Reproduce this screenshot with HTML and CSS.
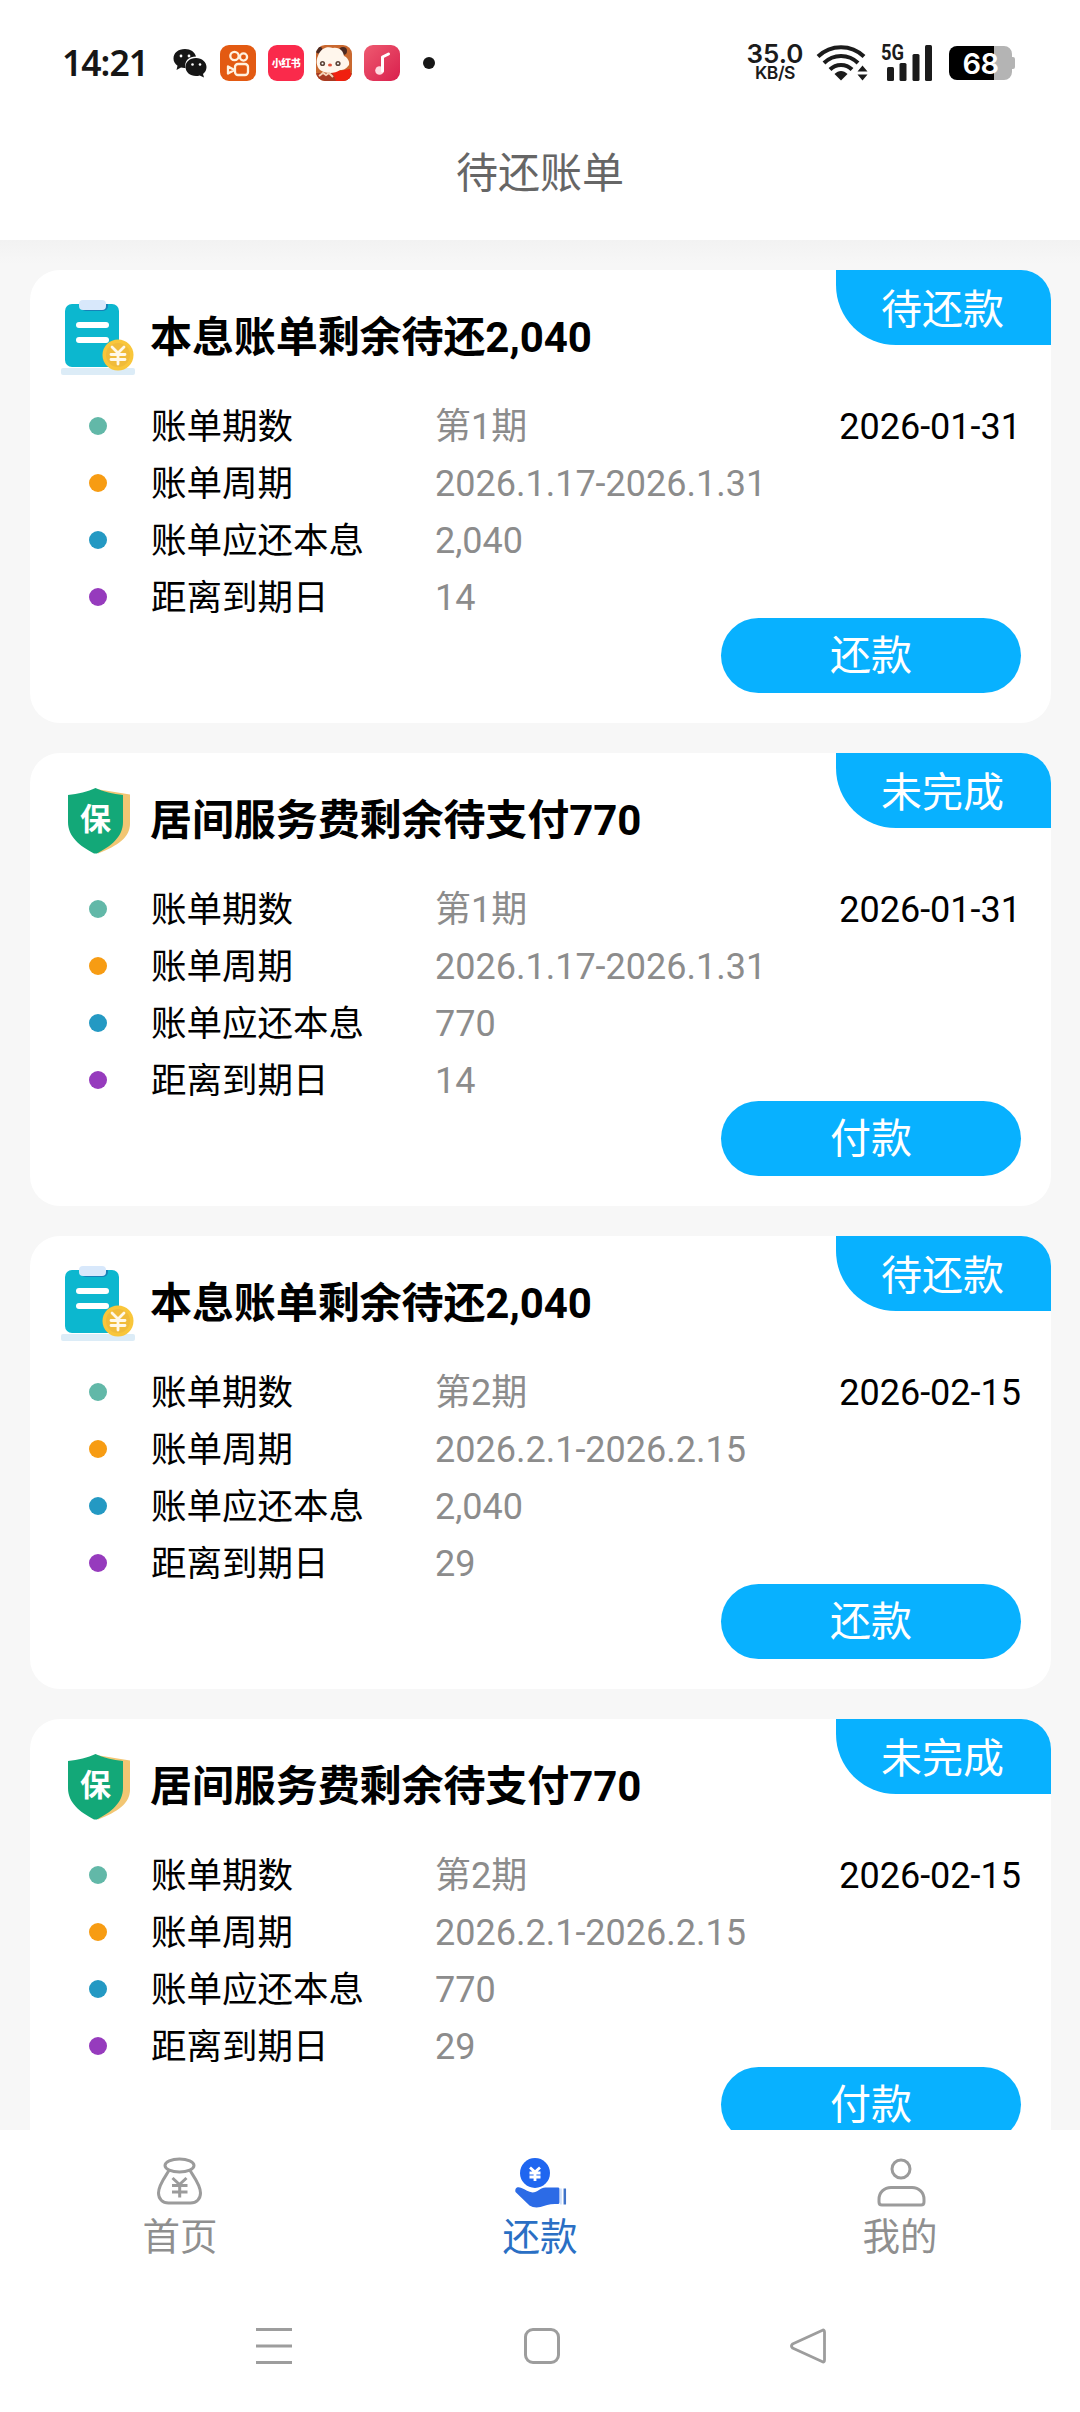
FILE: index.html
```html
<!DOCTYPE html>
<html lang="zh-CN">
<head>
<meta charset="utf-8">
<title>待还账单</title>
<link rel="stylesheet" href="styles.css">
</head>
<body>
<svg class="defs" width="0" height="0" aria-hidden="true">
  <symbol id="bill" viewBox="0 0 76 80">
    <rect x="1" y="70" width="74" height="7" rx="2" fill="#dcecf7"/>
    <rect x="5" y="6" width="54" height="63" rx="7" fill="#0cb7cf"/>
    <path d="M20 6h28v2a5 5 0 0 1-5 5H26a6 6 0 0 1-6-6z" fill="#1682b8"/>
    <rect x="19" y="2" width="27" height="10" rx="4" fill="#d8e8fb"/>
    <rect x="16" y="24" width="33" height="6" rx="3" fill="#fff"/>
    <rect x="16" y="39" width="33" height="6" rx="3" fill="#fff"/>
    <circle cx="58" cy="57" r="15.500" fill="#f9c63a"/>
    <circle cx="58" cy="57" r="12" fill="#f0bb3a"/>
    <path d="M52 49l6 6 6-6M51 56.500h14M51 61.500h14M58 55v11" fill="none" stroke="#fff8e8" stroke-width="2.800" stroke-linecap="round"/>
  </symbol>
  <symbol id="shield" viewBox="0 0 76 80">
    <path d="M36 8l34 5.500v29c0 14-12 22-32 30z" fill="#f2c673"/>
    <path d="M35.500 7C43 10.500 53 13 63 14V41c0 15-12 24-26 31.500h-3C20 65 8 56 8 41V14C18 13 28 10.500 35.500 7z" fill="#13a878"/>
    <text x="35.500" y="48.500" text-anchor="middle" class="shield-text">保</text>
  </symbol>
</svg>

<header class="status">
  <div class="status-left">
    <span class="clock">14:21</span>
    <svg class="wechat" width="34" height="30" viewBox="0 0 34 30">
      <path d="M12 1C5 1 .5 5 .5 10.500c0 3 1.500 5.500 4 7.300L3.500 22l4.500-2.500c1.500.4 3 .5 4.500.4C11 13 16 8.500 23 8.500 22 4 17.500 1 12 1z" fill="#161616"/>
      <path d="M23 10c-6.500 0-10.500 4-10.500 9s4.500 9 10.500 9c1.300 0 2.500-.2 3.700-.6L31 29.500l-1-3.600c2.300-1.700 3.500-4 3.500-6.900 0-5-4.500-9-10.500-9z" fill="#161616"/>
      <g fill="#fff"><circle cx="8" cy="8" r="1.400"/><circle cx="16" cy="8" r="1.400"/><circle cx="19.500" cy="16.500" r="1.300"/><circle cx="27" cy="16.500" r="1.300"/></g>
    </svg>
    <svg class="app" viewBox="0 0 36 36">
      <rect width="36" height="36" rx="9" fill="#e35a12"/>
      <g fill="none" stroke="#fff1df" stroke-width="2.300" stroke-linejoin="round"><circle cx="14.500" cy="11" r="4.200"/><circle cx="23.500" cy="12" r="3.600"/><rect x="15" y="19" width="13" height="11" rx="3"/><path d="M8 21.500l6.500 3.500L8 28.500z"/></g>
    </svg>
    <svg class="app" viewBox="0 0 36 36">
      <rect width="36" height="36" rx="9" fill="#fa2a4b"/>
      <text x="18" y="22" text-anchor="middle" class="app-text">小红书</text>
    </svg>
    <svg class="app" viewBox="0 0 36 36">
      <defs><clipPath id="round"><rect width="36" height="36" rx="9"/></clipPath></defs>
      <g clip-path="url(#round)">
        <rect width="36" height="36" fill="#c9682f"/>
        <path d="M0 28h36v8H0z" fill="#a83a22"/>
        <path d="M16 27l18-3 2 12H20z" fill="#f0200f"/>
        <circle cx="3" cy="5" r="3.500" fill="#4c2a22"/><circle cx="27" cy="6" r="4" fill="#4c2a22"/>
        <path d="M2 11C5 3 11 1 17 3c7-1 10 3 11 8 3 1 6 5 5 9-3 4-5 5-9 5-5 4-15 4-20 0C0 21 0 15 2 11z" fill="#fff6ec"/>
        <circle cx="6.500" cy="18.500" r="2.600" fill="#5d4438"/><circle cx="22" cy="18.500" r="2.600" fill="#5d4438"/>
        <circle cx="6.500" cy="18.500" r="1" fill="#fff"/><circle cx="22" cy="18.500" r="1" fill="#fff"/>
        <ellipse cx="14" cy="20" rx="2" ry="1.500" fill="#e2513a"/>
        <path d="M3 31l4-3 3 2 3-2 4 4" stroke="#f5d3b8" stroke-width="2" fill="none"/>
      </g>
    </svg>
    <svg class="app" viewBox="0 0 36 36">
      <defs><linearGradient id="pink" x1="0" y1="0" x2="1" y2="1"><stop offset="0" stop-color="#ee5a70"/><stop offset="1" stop-color="#d91f4d"/></linearGradient></defs>
      <rect width="36" height="36" rx="9" fill="url(#pink)"/>
      <circle cx="15.500" cy="25.500" r="4.300" fill="#ffd9e0"/>
      <path d="M18.500 26V12l6-3" fill="none" stroke="#fff" stroke-width="3" stroke-linecap="round" stroke-linejoin="round"/>
    </svg>
    <span class="more-dot"></span>
  </div>
  <div class="status-right">
    <div class="speed"><span class="speed-num">35.0</span><span class="speed-unit">KB/S</span></div>
    <svg width="54" height="40" viewBox="815 42 54 40">
      <g fill="none" stroke="#1b1b1b" stroke-width="4"><path d="M818 55.500a33 33 0 0 1 46 0"/><path d="M824 62a24 24 0 0 1 34 0"/><path d="M830 68.500a15.500 15.500 0 0 1 22 0"/></g>
      <path d="M834.500 73c4-4 9-4 13 0l-6.500 6.500z" fill="#1b1b1b"/>
      <path d="M857.500 70.500l5-6 5 6zM857.500 73.500l5 6 5-6z" fill="#1b1b1b"/>
    </svg>
    <svg class="signal" width="54" height="40" viewBox="880 42 54 40">
      <text x="881" y="59" class="net" textLength="23" lengthAdjust="spacingAndGlyphs">5G</text>
      <g fill="#1b1b1b"><rect x="887" y="66" width="7" height="14" rx="1.500"/><rect x="899.500" y="62" width="7" height="18" rx="1.500"/><rect x="912.500" y="53" width="7" height="27" rx="1.500"/><rect x="925" y="44" width="7" height="36" rx="1.500"/></g>
    </svg>
    <svg class="battery" width="68" height="36" viewBox="948 45 68 36">
      <path d="M994 46h10a8 8 0 0 1 8 8v3h1q2 0 2 2v8q0 2-2 2h-1v3a8 8 0 0 1-8 8h-10z" fill="#b4b4b4"/>
      <path d="M957 46h37v34h-37a8 8 0 0 1-8-8V54a8 8 0 0 1 8-8z" fill="#000"/>
      <text x="980.500" y="73.500" text-anchor="middle" class="charge">68</text>
    </svg>
  </div>
</header>

<h1 class="page-title">待还账单</h1>

<main class="list">
  <article class="card">
    <span class="tag">待还款</span>
    <div class="head"><svg class="head-icon"><use href="#bill"/></svg><h2>本息账单剩余待还2,040</h2></div>
    <div class="rows">
      <div class="row"><i class="dot teal"></i><span class="label">账单期数</span><span class="value">第1期</span><span class="date">2026-01-31</span></div>
      <div class="row"><i class="dot orange"></i><span class="label">账单周期</span><span class="value">2026.1.17-2026.1.31</span></div>
      <div class="row"><i class="dot blue"></i><span class="label">账单应还本息</span><span class="value">2,040</span></div>
      <div class="row"><i class="dot purple"></i><span class="label">距离到期日</span><span class="value">14</span></div>
    </div>
    <button class="pay">还款</button>
  </article>

  <article class="card">
    <span class="tag">未完成</span>
    <div class="head"><svg class="head-icon"><use href="#shield"/></svg><h2>居间服务费剩余待支付770</h2></div>
    <div class="rows">
      <div class="row"><i class="dot teal"></i><span class="label">账单期数</span><span class="value">第1期</span><span class="date">2026-01-31</span></div>
      <div class="row"><i class="dot orange"></i><span class="label">账单周期</span><span class="value">2026.1.17-2026.1.31</span></div>
      <div class="row"><i class="dot blue"></i><span class="label">账单应还本息</span><span class="value">770</span></div>
      <div class="row"><i class="dot purple"></i><span class="label">距离到期日</span><span class="value">14</span></div>
    </div>
    <button class="pay">付款</button>
  </article>

  <article class="card">
    <span class="tag">待还款</span>
    <div class="head"><svg class="head-icon"><use href="#bill"/></svg><h2>本息账单剩余待还2,040</h2></div>
    <div class="rows">
      <div class="row"><i class="dot teal"></i><span class="label">账单期数</span><span class="value">第2期</span><span class="date">2026-02-15</span></div>
      <div class="row"><i class="dot orange"></i><span class="label">账单周期</span><span class="value">2026.2.1-2026.2.15</span></div>
      <div class="row"><i class="dot blue"></i><span class="label">账单应还本息</span><span class="value">2,040</span></div>
      <div class="row"><i class="dot purple"></i><span class="label">距离到期日</span><span class="value">29</span></div>
    </div>
    <button class="pay">还款</button>
  </article>

  <article class="card">
    <span class="tag">未完成</span>
    <div class="head"><svg class="head-icon"><use href="#shield"/></svg><h2>居间服务费剩余待支付770</h2></div>
    <div class="rows">
      <div class="row"><i class="dot teal"></i><span class="label">账单期数</span><span class="value">第2期</span><span class="date">2026-02-15</span></div>
      <div class="row"><i class="dot orange"></i><span class="label">账单周期</span><span class="value">2026.2.1-2026.2.15</span></div>
      <div class="row"><i class="dot blue"></i><span class="label">账单应还本息</span><span class="value">770</span></div>
      <div class="row"><i class="dot purple"></i><span class="label">距离到期日</span><span class="value">29</span></div>
    </div>
    <button class="pay">付款</button>
  </article>
</main>

<nav class="tabs">
  <a class="tab">
    <svg width="54" height="54" viewBox="0 0 54 54" fill="none" stroke="#9b9b9b" stroke-width="3">
      <ellipse cx="26.500" cy="9.500" rx="14.500" ry="6.500"/>
      <path d="M16 14.500C12 21 5.500 29 5.500 37c0 6 4 10 10 10h22c6 0 10-4 10-10 0-8-6.500-16-10.500-22.500"/>
      <path d="M19.500 22l7 6.500 7-6.500M19 29.500h15.500M19 36h15.500M26.700 28v13.500"/>
    </svg>
    <span>首页</span>
  </a>
  <a class="tab active">
    <svg width="54" height="54" viewBox="-1.500 0 54 54">
      <circle cx="20.500" cy="17" r="15" fill="#1f66f0"/>
      <path d="M15.500 11.500l5 4.500 5-4.500M15 17h11M15 21h11M20.500 16v9" fill="none" stroke="#fff" stroke-width="2.800"/>
      <path d="M1 36c-1-4 2-6 6-4 4 1.500 7 4 11 4.500 5 0 8-5 13-5h12c1.500 0 2 .5 2 2v12.500c0 1.500-.5 2-2 2-7-.5-12 1-17 3-4 1-8 .5-11-1.500z" fill="#2c6be6"/>
      <path d="M46.300 32.500v16" stroke="#cfe0fb" stroke-width="2"/>
      <path d="M50.300 32.500v16" stroke="#3f73c9" stroke-width="2.500"/>
    </svg>
    <span>还款</span>
  </a>
  <a class="tab">
    <svg width="54" height="54" viewBox="0 0 54 54" fill="none" stroke="#9b9b9b" stroke-width="3">
      <circle cx="28" cy="13" r="9"/>
      <path d="M18 31.500h21c7 0 12 5 12 12v2.500c0 2-1 3-3 3H9c-2 0-3-1-3-3v-2.500c0-7 5-12 12-12z"/>
    </svg>
    <span>我的</span>
  </a>
</nav>

<footer class="sysnav">
  <svg width="40" height="40" viewBox="0 0 40 40" stroke="#9d9d9d" stroke-width="3"><path d="M2 3.500h36M2 20h36M2 36.500h36"/></svg>
  <svg width="40" height="40" viewBox="0 0 40 40" fill="none" stroke="#9d9d9d" stroke-width="3"><rect x="4.500" y="3.500" width="33" height="33" rx="7.500"/></svg>
  <svg width="40" height="40" viewBox="0 0 40 40" fill="none" stroke="#9d9d9d" stroke-width="2.800" stroke-linejoin="round"><path d="M34 4.500Q36.500 3 36.500 6v28q0 3-2.500 1.500L4.500 22q-2-2 0-4z"/></svg>
</footer>
</body>
</html>
```
FILE: styles.css
```css
* { box-sizing: border-box; }
body {
  margin: 0;
  width: 1080px;
  height: 2412px;
  overflow: hidden;
  display: flex;
  flex-direction: column;
  background: #fff;
  color: #000;
  font-family: Roboto, "Noto Sans CJK SC", sans-serif;
}
svg { display: block; flex: none; }
.defs { position: absolute; }
h1, h2 { margin: 0; }

.status {
  height: 126px;
  padding: 0 64px 0 62px;
  display: flex;
  justify-content: space-between;
  align-items: center;
}
.status-left { display: flex; align-items: center; gap: 12px; }
.clock {
  width: 99px;
  margin-top: -3px;
  font: 600 35.5px/50px "Noto Sans", sans-serif;
  letter-spacing: -1px;
  color: #161616;
  white-space: nowrap;
}
.app { width: 36px; height: 36px; }
.wechat + .app { margin-left: 1px; }
.app-text { font: 900 10px "Noto Sans CJK SC", sans-serif; fill: #fff; letter-spacing: -.5px; }
.more-dot { width: 12px; height: 12px; margin-left: 11px; border-radius: 50%; background: #161616; }
.status-right { display: flex; align-items: center; }
.speed {
  width: 60px;
  margin-right: 10px;
  display: flex;
  flex-direction: column;
  align-items: center;
  color: #1b1b1b;
  font-family: Inter, sans-serif;
  font-weight: 600;
}
.speed-num { font-size: 26px; line-height: 20px; margin-top: -1px; }
.speed-unit { font-size: 17.500px; line-height: 18px; letter-spacing: -.5px; }
.signal { margin-left: 11px; }
.battery { margin-left: 14px; }
.net { font: 700 22px Roboto, sans-serif; fill: #1b1b1b; }
.charge { font: 600 29px Inter, sans-serif; fill: #fff; letter-spacing: -.5px; }

.page-title {
  height: 114px;
  padding-top: 18px;
  font-size: 42px;
  line-height: 60px;
  font-weight: 400;
  text-align: center;
  color: #666;
}

.list {
  height: 1890px;
  padding: 30px 29px 0 30px;
  overflow: hidden;
  display: flex;
  flex-direction: column;
  gap: 30px;
  background: linear-gradient(#f2f2f2, #f7f7f7 24px);
}
.card {
  position: relative;
  flex: none;
  height: 453px;
  display: flex;
  flex-direction: column;
  background: #fff;
  border-radius: 30px;
}
.tag {
  position: absolute;
  top: 0;
  right: 0;
  width: 215px;
  height: 75px;
  padding-right: 2px;
  border-radius: 0 30px 0 60px;
  background: #08b1ff;
  color: #fff;
  font-size: 41px;
  line-height: 81px;
  text-align: center;
}
.head {
  height: 127px;
  padding: 8px 0 0 30px;
  display: flex;
  align-items: center;
  gap: 14px;
}
.head-icon { width: 76px; height: 80px; }
.head h2 { font-size: 42px; line-height: 60px; font-weight: 700; letter-spacing: -.08px; white-space: nowrap; }
.shield-text { font: 700 31px "Noto Sans CJK SC", sans-serif; fill: #fff; }
.row {
  height: 57px;
  padding: 0 30px 0 59px;
  display: grid;
  grid-template-columns: 62px 284px 1fr auto;
  align-items: center;
  font-size: 36px;
  line-height: 54px;
  white-space: nowrap;
}
.row span { padding-top: 3px; }
.row .label { font-size: 35.5px; }
.dot { width: 18px; height: 18px; border-radius: 50%; }
.teal { background: #62b8a8; }
.orange { background: #f79c13; }
.blue { background: #2499c3; }
.purple { background: #963bbd; }
.value { color: #8c8c8c; }
.pay {
  align-self: flex-end;
  width: 300px;
  height: 75px;
  margin: -7px 30px 0 0;
  padding: 1px 0 0;
  border: 0;
  border-radius: 38px;
  background: #08b1ff;
  color: #fff;
  font: 41px/74px Roboto, "Noto Sans CJK SC", sans-serif;
}

.tabs { height: 150px; display: flex; }
.tab {
  flex: 1;
  padding-top: 26px;
  display: flex;
  flex-direction: column;
  align-items: center;
  font-size: 37.5px;
  line-height: 54px;
  color: #8f8f8f;
}
.tab.active { color: #2a6fc4; }
.sysnav {
  height: 132px;
  padding: 46px 252px 0 254px;
  display: flex;
  justify-content: space-between;
}
```
